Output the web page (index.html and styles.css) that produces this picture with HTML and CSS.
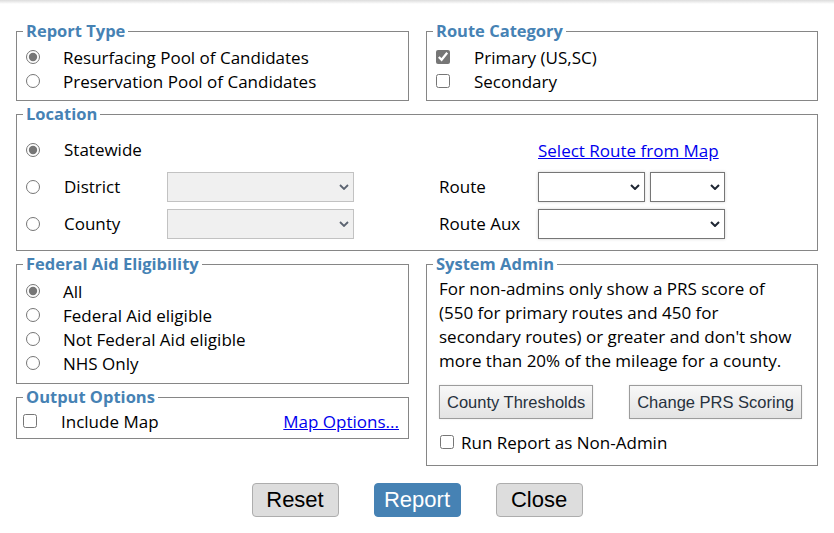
FILE: index.html
```html
<!DOCTYPE html>
<html lang="en">
<head>
<meta charset="utf-8">
<title>Report Options</title>
<link rel="stylesheet" href="styles.css">
</head>
<body>
<div class="topshade"></div>
<main class="page">
  <div class="grid">
    <fieldset class="box">
      <legend>Report Type</legend>
      <div class="opts">
        <label class="opt"><input type="radio" name="rtype" checked><span>Resurfacing Pool of Candidates</span></label>
        <label class="opt"><input type="radio" name="rtype"><span>Preservation Pool of Candidates</span></label>
      </div>
    </fieldset>

    <fieldset class="box">
      <legend>Route Category</legend>
      <div class="opts">
        <label class="opt chk"><input type="checkbox" checked><span>Primary (US,SC)</span></label>
        <label class="opt chk"><input type="checkbox"><span>Secondary</span></label>
      </div>
    </fieldset>

    <fieldset class="box wide">
      <legend>Location</legend>
      <div class="loc">
        <input class="loc-radio" type="radio" name="loc" checked>
        <span class="loc-label">Statewide</span>
        <a class="map-link" href="#">Select Route from Map</a>

        <input class="loc-radio" type="radio" name="loc">
        <span class="loc-label">District</span>
        <span class="sel disabled"><select disabled><option></option></select><svg class="chev" width="10" height="6" viewBox="0 0 10 6"><path d="M1 1 L5 5 L9 1" fill="none" stroke="#5b6370" stroke-width="1.8"/></svg></span>
        <span></span>
        <span class="loc-label">Route</span>
        <span class="sel-pair">
          <span class="sel route1"><select><option></option></select><svg class="chev" width="10" height="6" viewBox="0 0 10 6"><path d="M1 1 L5 5 L9 1" fill="none" stroke="#1e2633" stroke-width="2"/></svg></span>
          <span class="sel route2"><select><option></option></select><svg class="chev" width="10" height="6" viewBox="0 0 10 6"><path d="M1 1 L5 5 L9 1" fill="none" stroke="#1e2633" stroke-width="2"/></svg></span>
        </span>

        <input class="loc-radio" type="radio" name="loc">
        <span class="loc-label">County</span>
        <span class="sel disabled"><select disabled><option></option></select><svg class="chev" width="10" height="6" viewBox="0 0 10 6"><path d="M1 1 L5 5 L9 1" fill="none" stroke="#5b6370" stroke-width="1.8"/></svg></span>
        <span></span>
        <span class="loc-label">Route Aux</span>
        <span class="sel"><select><option></option></select><svg class="chev" width="10" height="6" viewBox="0 0 10 6"><path d="M1 1 L5 5 L9 1" fill="none" stroke="#1e2633" stroke-width="2"/></svg></span>
      </div>
    </fieldset>

    <div class="col">
      <fieldset class="box">
        <legend>Federal Aid Eligibility</legend>
        <div class="opts fed">
          <label class="opt"><input type="radio" name="fed" checked><span>All</span></label>
          <label class="opt"><input type="radio" name="fed"><span>Federal Aid eligible</span></label>
          <label class="opt"><input type="radio" name="fed"><span>Not Federal Aid eligible</span></label>
          <label class="opt"><input type="radio" name="fed"><span>NHS Only</span></label>
        </div>
      </fieldset>
      <fieldset class="box">
        <legend>Output Options</legend>
        <div class="outrow">
          <label class="opt"><input type="checkbox"><span>Include Map</span></label>
          <a class="map-opts" href="#">Map Options...</a>
        </div>
      </fieldset>
    </div>

    <fieldset class="box">
      <legend>System Admin</legend>
      <div class="admin">
        <p class="admin-text">For non-admins only show a PRS score of<br>(550 for primary routes and 450 for<br>secondary routes) or greater and don't show<br>more than 20% of the mileage for a county.</p>
        <div class="admin-btns">
          <button class="btn-light" type="button">County Thresholds</button>
          <button class="btn-light" type="button">Change PRS Scoring</button>
        </div>
        <label class="nonadmin"><input type="checkbox"><span>Run Report as Non-Admin</span></label>
      </div>
    </fieldset>
  </div>

  <div class="actions">
    <button class="btn" type="button">Reset</button>
    <button class="btn primary" type="button">Report</button>
    <button class="btn" type="button">Close</button>
  </div>
</main>
</body>
</html>
```

FILE: styles.css
```css
* { box-sizing: border-box; }

body {
  margin: 0;
  background: #fff;
  color: #000;
  font-family: "Open Sans", "Noto Sans", sans-serif;
  font-size: 17px;
}

.topshade {
  height: 4px;
  background: linear-gradient(#dcdcdc, #ffffff);
}

.page {
  padding: 17px 16px 0 16px;
}

.grid {
  display: grid;
  grid-template-columns: 393px 392px;
  column-gap: 17px;
  row-gap: 3px;
  align-items: start;
}

.wide { grid-column: 1 / 3; }

.col {
  display: flex;
  flex-direction: column;
  gap: 3px;
}

.box {
  margin: 0;
  padding: 0 6px;
  border: 1px solid #868686;
  min-width: 0;
}

.box legend {
  padding: 0 3px;
  font-size: 16.5px;
  font-weight: 700;
  line-height: 20px;
  color: #4682b4;
}

.opts {
  padding: 4px 0 7px 3px;
}

.opts.fed {
  padding: 5px 0 8px 3px;
}

.opt {
  display: flex;
  align-items: center;
  height: 24px;
}

input[type="radio"],
input[type="checkbox"] {
  width: 14px;
  height: 14px;
  margin: 0;
  accent-color: #767676;
  flex: none;
}

.opt input { margin-right: 23px; }
.opt.chk input { margin-right: 24px; }

/* Location */
.loc {
  display: grid;
  grid-template-columns: 38px 103px 187px 85px 99px 187px;
  grid-auto-rows: 30px;
  row-gap: 7px;
  align-items: center;
  padding: 11px 0 11px 3px;
}

.loc-label { line-height: 24px; }

.map-link {
  grid-column: 6;
  color: #0000ee;
  white-space: nowrap;
}

.sel {
  position: relative;
  display: block;
  height: 30px;
}

.sel select {
  appearance: none;
  -webkit-appearance: none;
  display: block;
  width: 100%;
  height: 100%;
  margin: 0;
  border: 1px solid #767676;
  border-radius: 0;
  background: #fff;
  box-shadow: 0 0 3px rgba(0, 0, 0, 0.18);
  font: inherit;
}

.sel.disabled select {
  background: #ebebeb;
  border-color: #a9a9a9;
  box-shadow: none;
}

.chev {
  position: absolute;
  right: 5px;
  top: 12px;
  pointer-events: none;
}

.sel-pair {
  display: flex;
  gap: 5px;
}

.route1 { width: 107px; }
.route2 { width: 75px; }

/* Output options */
.outrow {
  display: flex;
  align-items: center;
  padding: 2px 3px 5px 0;
}

.outrow .opt input { margin-right: 24px; }

.map-opts {
  margin-left: auto;
  color: #0000ee;
}

/* System admin */
.admin {
  padding: 3px 0 11px 6px;
}

.admin-text {
  margin: 0;
  line-height: 24px;
}

.admin-btns {
  display: flex;
  gap: 36px;
  margin-top: 12px;
}

.btn-light {
  height: 34px;
  padding: 0 7px;
  font-family: "Liberation Sans", Arial, sans-serif;
  font-size: 16.5px;
  color: #27313d;
  background: linear-gradient(#f8f8f8, #e3e3e3);
  border: 1px solid #9c9c9c;
  border-radius: 0;
  box-shadow: 0 0 2px rgba(0, 0, 0, 0.1);
}

.nonadmin {
  display: flex;
  align-items: center;
  height: 24px;
  margin-top: 11px;
  padding-left: 1px;
}

.nonadmin input { margin-right: 7px; }

/* Actions */
.actions {
  display: flex;
  justify-content: center;
  gap: 35px;
  margin-top: 17px;
}

.btn {
  width: 87px;
  height: 34px;
  padding: 0;
  font-family: "Liberation Sans", Arial, sans-serif;
  font-size: 22px;
  color: #000;
  background: #dddddd;
  border: 1px solid #adadad;
  border-radius: 4px;
}

.btn.primary {
  background: #4682b4;
  border-color: #4682b4;
  color: #fff;
}
```
